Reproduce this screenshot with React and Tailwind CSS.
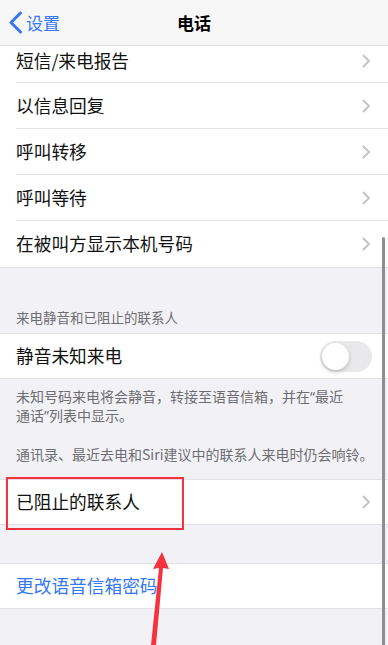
import React from "react";

const font = { fontFamily: '"Noto Sans CJK SC", "Noto Sans", sans-serif' };
const latin = { fontFamily: '"Noto Sans", "Liberation Sans", sans-serif' };

function Chevron() {
  return (
    <svg width="9" height="14" viewBox="0 0 9 14" className="shrink-0">
      <path d="M1.5 1.5 L7 7 L1.5 12.5" fill="none" stroke="#c4c4c7" strokeWidth="2" strokeLinecap="round" strokeLinejoin="round" />
    </svg>
  );
}

function Row({ label, last }) {
  return (
    <div className="flex items-center h-[46px] pl-[16px] pr-[17px] bg-white relative">
      <span className="flex-1 text-[17.7px] text-[#111] leading-none">{label}</span>
      <Chevron />
      {!last && <div className="absolute bottom-0 left-[16px] right-0 h-px bg-[#e2e2e4]" />}
    </div>
  );
}

export default function App() {
  return (
    <div className="w-[388px] h-[645px] overflow-hidden bg-[#f2f2f6] relative" style={font}>
      {/* nav */}
      <div className="h-[46px] bg-[#f7f7f7] border-b border-[#dcdcdc] flex items-center relative">
        <div className="flex items-center pl-[8px]">
          <svg width="15" height="23" viewBox="0 0 15 23">
            <path d="M12.5 2 L3 11.5 L12.5 21" fill="none" stroke="#3478f6" strokeWidth="3" strokeLinecap="round" strokeLinejoin="round" />
          </svg>
          <span className="text-[17px] text-[#3478f6] ml-[3px] leading-none">设置</span>
        </div>
        <div className="absolute left-0 right-0 text-center text-[17px] font-semibold text-black leading-none">电话</div>
      </div>

      {/* first group */}
      <div className="bg-white">
        <div className="flex items-center h-[37px] pb-[7px] pl-[16px] pr-[17px] relative">
          <span className="flex-1 text-[17.7px] text-[#111] leading-none">短信/来电报告</span>
          <Chevron />
          <div className="absolute bottom-0 left-[16px] right-0 h-px bg-[#e2e2e4]" />
        </div>
        <Row label="以信息回复" />
        <Row label="呼叫转移" />
        <Row label="呼叫等待" />
        <Row label="在被叫方显示本机号码" last />
      </div>

      {/* header */}
      <div className="h-[66px] flex items-end pl-[16px] pb-[9px] border-t border-[#e2e2e4]">
        <span className="text-[13.5px] text-[#6d6d72] leading-none">来电静音和已阻止的联系人</span>
      </div>

      <div className="bg-white h-[46px] flex items-center pl-[16px] pr-[16px] border-y border-[#e2e2e4]">
        <span className="flex-1 text-[17.7px] text-[#111] leading-none">静音未知来电</span>
        <div className="w-[52px] h-[31px] rounded-full bg-[#e9e9eb] p-[2px] flex items-center">
          <div className="w-[27px] h-[27px] rounded-full bg-white shadow-[0_2px_4px_rgba(0,0,0,0.2)]" />
        </div>
      </div>

      <div className="pl-[16px] pr-[4px] pt-[8px] text-[14px] text-[#6d6d72] leading-[18px] whitespace-nowrap">
        <div>未知号码来电将会静音，转接至语音信箱，并在<span style={latin}>“</span>最近</div>
        <div>通话<span style={latin}>”</span>列表中显示。</div>
        <div className="mt-[20px]">通讯录、最近去电和Siri建议中的联系人来电时仍会响铃。</div>
      </div>

      <div className="mt-[16px] border-y border-[#e2e2e4] bg-white h-[46px] flex items-center pl-[16px] pr-[17px]">
        <span className="flex-1 text-[17.7px] text-[#111] leading-none">已阻止的联系人</span>
        <Chevron />
      </div>

      <div className="mt-[38px] border-y border-[#e2e2e4] bg-white h-[46px] flex items-center pl-[16px]">
        <span className="text-[17.7px] text-[#3478f6] leading-none">更改语音信箱密码</span>
      </div>

      {/* scroll indicator */}
      <div className="absolute left-[382px] top-[237px] w-[3px] h-[420px] rounded-full bg-[#8e8e92]" />

      {/* red highlight box */}
      <div className="absolute left-[6px] top-[477px] w-[178px] h-[53px] border-[2px] border-[#f5333f]" />

      {/* red arrow */}
      <svg className="absolute left-0 top-0" width="388" height="645" viewBox="0 0 388 645">
        <polygon points="162,552 153,569 159,568 151,645 156,645 163,568 169,569" fill="#f5333f" />
      </svg>
    </div>
  );
}
